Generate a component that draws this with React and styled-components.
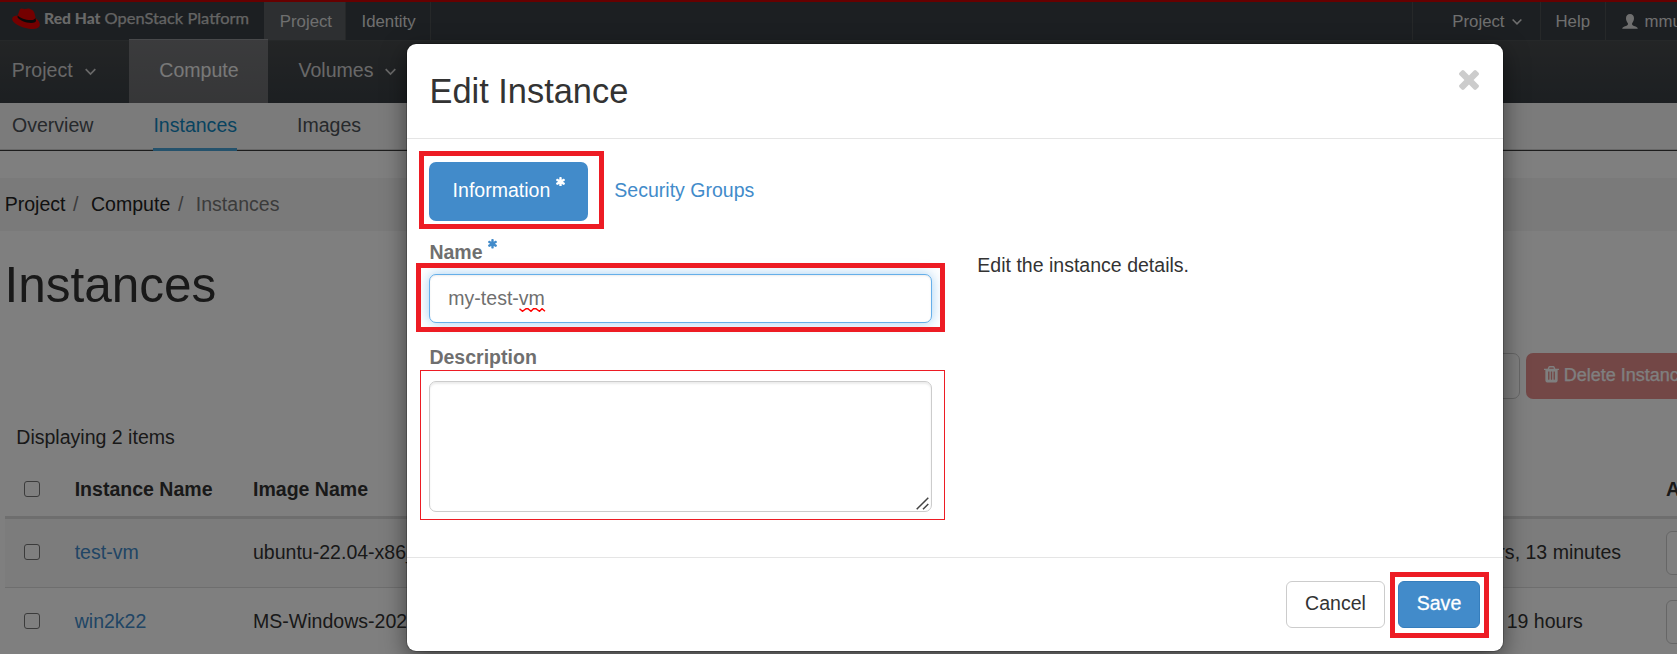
import React from "react";
import styled, { createGlobalStyle } from "styled-components";

const GlobalStyle = createGlobalStyle`
  *, *::before, *::after { box-sizing: border-box; }
  html, body { margin: 0; padding: 0; background: #fff; overflow: hidden; }
  body { font: 19.55px/28px "Liberation Sans", Arial, sans-serif; color: #333; }
`;

const Screen = styled.div`
  position: relative;
  width: 1677px;
  height: 654px;
  overflow: hidden;
  background: #fff;
`;

/* ---------- top bar ---------- */
const TopBar = styled.header`
  display: flex;
  height: 41px;
  border-top: 2px solid #cc0000;
  border-bottom: 1px solid #4d5053;
  background: #393f44;
  font-size: 16.8px;
  color: #dedede;
`;
const Brand = styled.div`
  width: 264px;
  svg { display: block; }
`;
const TopItem = styled.div`
  display: flex;
  align-items: center;
  flex: none;
  width: ${(p) => p.$w}px;
  padding: 1px 0 0 ${(p) => p.$pl}px;
  white-space: nowrap;
  overflow: hidden;
  border-${(p) => p.$side || "right"}: 1px solid #4d5053;
  background: ${(p) => (p.$active ? "#5a5e63" : "transparent")};
  svg { flex: none; margin-right: ${(p) => p.$iconGap || 0}px; }
`;
const Spacer = styled.div`
  flex: 1;
`;

/* ---------- main navigation ---------- */
const MainNav = styled.nav`
  display: flex;
  height: 62px;
  background: linear-gradient(#474a4c, #393f44);
  color: #d1d1d1;
`;
const MainItem = styled.div`
  display: flex;
  align-items: center;
  justify-content: ${(p) => (p.$active ? "center" : "flex-start")};
  width: ${(p) => p.$w}px;
  height: ${(p) => (p.$active ? 64 : 62)}px;
  margin-top: ${(p) => (p.$active ? -2 : 0)}px;
  padding: 0 0 4px ${(p) => p.$pl || 0}px;
  border-top: ${(p) => (p.$active ? "1px solid #919396" : "0")};
  background: ${(p) => (p.$active ? "linear-gradient(#76777a, #6c6d70)" : "transparent")};
  color: ${(p) => (p.$active ? "#f1f1f1" : "inherit")};
  svg { margin-left: ${(p) => p.$gap || 0}px; margin-top: 3px; }
`;
const SubNav = styled.nav`
  display: flex;
  gap: 60px;
  height: 48px;
  padding-left: 12px;
  background: #f7f7f7;
  border-bottom: 1px solid #3a3a3a;
  box-shadow: inset 0 -1px 0 #cecece;
`;
const SubItem = styled.div`
  height: 48px;
  line-height: 44px;
  color: ${(p) => (p.$active ? "#1187c0" : "#4d5258")};
  border-bottom: ${(p) => (p.$active ? "3px solid #4aa4d8" : "0")};
`;

/* ---------- page content ---------- */
const Breadcrumb = styled.div`
  display: flex;
  height: 53px;
  margin-top: 27px;
  padding-left: 4.7px;
  line-height: 52px;
  background: #f5f5f5;
`;
const Crumb = styled.span`
  color: ${(p) => (p.$current ? "#777" : "#222")};
`;
const Slash = styled.span`
  margin: 0 12.5px 0 7.6px;
  color: #777;
`;
const PageTitle = styled.h1`
  height: 70px;
  margin: 19px 0 0;
  padding-left: 4.5px;
  font-size: 49.5px;
  font-weight: 400;
  line-height: 70px;
  color: #333;
`;
const ActionBar = styled.div`
  display: flex;
  justify-content: flex-end;
  gap: 6px;
  height: 46px;
  margin-top: 33px;
`;
const LaunchButton = styled.div`
  width: 120px;
  border: 1px solid #ccc;
  border-radius: 7px;
  background: #fff;
`;
const DeleteButton = styled.div`
  display: flex;
  align-items: center;
  gap: 4.7px;
  width: 151px;
  padding: 0 0 3px 18px;
  border-radius: 7px 0 0 7px;
  background: #e68f8d;
  color: #fff;
  font-size: 18px;
  white-space: nowrap;
  overflow: hidden;
  -webkit-text-stroke: 0.25px #fff;
  svg { flex: none; }
`;
const Count = styled.div`
  margin-top: 24px;
  padding-left: 16.3px;
  line-height: 28px;
`;
const Table = styled.div`
  margin-left: 5px;
`;
const Row = styled.div`
  display: grid;
  grid-template-columns: 69.7px 178.3px 1196.5px 216.5px 60px;
  align-items: center;
  height: ${(p) => p.$h}px;
  padding: ${(p) => (p.$head ? "10px 0 0" : "0 0 2px")};
  border-bottom: ${(p) => (p.$head ? "3px solid #dddddd" : "1px solid #dddddd")};
  background: ${(p) => (p.$odd ? "#f9f9f9" : "#fff")};
  font-weight: ${(p) => (p.$head ? 700 : 400)};
  white-space: nowrap;
`;
const CheckBox = styled.div`
  width: 16px;
  height: 16px;
  margin-left: 19px;
  border: 1.5px solid #767676;
  border-radius: 3px;
  background: #fff;
`;
const InstanceLink = styled.a`
  color: #428bca;
`;
const RowButton = styled.div`
  width: 120px;
  height: 44px;
  margin-top: 2px;
  border: 1px solid #ccc;
  border-radius: 6px;
  background: #fff;
`;

/* ---------- modal ---------- */
const Backdrop = styled.div`
  position: absolute;
  inset: 0;
  background: rgba(0, 0, 0, 0.5);
`;
const Modal = styled.section`
  position: absolute;
  left: 407px;
  top: 44px;
  width: 1096px;
  height: 607px;
  border-radius: 9px;
  background: #fff;
  box-shadow: 0 0 0 1px rgba(0, 0, 0, 0.2), 0 8px 25px rgba(0, 0, 0, 0.5);
`;
const ModalHeader = styled.div`
  display: flex;
  justify-content: space-between;
  height: 95px;
  padding: 24px 24px 0 22.5px;
  border-bottom: 1px solid #e5e5e5;
  svg { margin-top: 2px; }
`;
const ModalTitle = styled.h2`
  margin: 0;
  font-size: 34.4px;
  font-weight: 400;
  line-height: 46px;
`;
const ModalBody = styled.div`
  height: 418px;
  padding: 23px 22px 0;
`;
const Tabs = styled.div`
  display: flex;
  height: 59px;
`;
const Marked = styled.div`
  position: relative;
`;
/* Red outline drawn around a part; $o is the outset: top right bottom left. */
const Outline = styled.div`
  position: absolute;
  pointer-events: none;
  inset: ${(p) => p.$o};
  border: ${(p) => (p.$thin ? 1 : 5)}px solid #ed1c24;
`;
const Tab = styled.div`
  display: flex;
  height: 59px;
  padding-left: ${(p) => (p.$active ? 23.6 : 26.3)}px;
  width: ${(p) => (p.$active ? "159px" : "auto")};
  line-height: 56px;
  border-radius: 7px;
  background: ${(p) => (p.$active ? "#428bca" : "transparent")};
  color: ${(p) => (p.$active ? "#fff" : "#428bca")};
  svg { margin: 14.5px 0 0 5.5px; }
`;
const Columns = styled.div`
  display: flex;
`;
const Fields = styled.div`
  width: 503px;
`;
const Label = styled.label`
  display: flex;
  height: ${(p) => p.$h}px;
  padding-top: ${(p) => p.$pt}px;
  padding-left: 0.4px;
  font-weight: 700;
  line-height: 28px;
  color: #6f6f6f;
  svg { margin: 1px 0 0 5px; color: #428bca; }
`;
const NameInput = styled.div`
  height: 49px;
  padding-left: 18.3px;
  line-height: 47px;
  border: 1px solid #66afe9;
  border-radius: 7px;
  background: #fff;
  color: #6f6f6f;
  box-shadow: inset 0 1px 2px rgba(0, 0, 0, 0.08), 0 0 13px rgba(102, 175, 233, 0.6);
`;
const Misspelt = styled.span`
  position: relative;
  svg { position: absolute; left: 0; bottom: -3px; }
`;
const TextArea = styled.div`
  display: flex;
  align-items: flex-end;
  justify-content: flex-end;
  height: 131px;
  padding: 0 2px 1px 0;
  border: 1px solid #ccc;
  border-radius: 7px;
  box-shadow: inset 0 2px 2px rgba(0, 0, 0, 0.075);
`;
const Help = styled.p`
  margin: 30px 0 0 45.3px;
`;
const ModalFooter = styled.div`
  display: flex;
  justify-content: flex-end;
  align-items: flex-start;
  gap: 13px;
  height: 94px;
  padding: 23px 23px 0 0;
  border-top: 1px solid #e5e5e5;
`;
const Button = styled.div`
  width: ${(p) => p.$w}px;
  height: 47px;
  line-height: 43px;
  text-align: center;
  border: 1px solid ${(p) => (p.$primary ? "#357ebd" : "#ccc")};
  border-radius: 6px;
  background: ${(p) => (p.$primary ? "#428bca" : "#fff")};
  color: ${(p) => (p.$primary ? "#fff" : "#333")};
  -webkit-text-stroke: ${(p) => (p.$primary ? "0.3px #fff" : "0")};
`;

/* ---------- icons ---------- */
const Chevron = ({ w = 11 }) => (
  <svg width={w} height="8" viewBox="0 0 11 8" fill="none" stroke="currentColor" strokeWidth="1.7">
    <path d="M.7 1.2 5.5 6 10.3 1.2" />
  </svg>
);
const Asterisk = () => (
  <svg width="9" height="9.6" viewBox="180 128 1432 1536" fill="currentColor">
    <path d="M1546 1050q46 26 59.5 77.5t-12.5 97.5l-64 110q-26 46-77.5 59.5t-97.5-12.5l-266-153v307q0 52-38 90t-90 38h-128q-52 0-90-38t-38-90v-307l-266 153q-46 26-97.5 12.5t-77.5-59.5l-64-110q-26-46-12.5-97.5t59.5-77.5l266-154-266-154q-46-26-59.5-77.5t12.5-97.5l64-110q26-46 77.5-59.5t97.5 12.5l266 153v-307q0-52 38-90t90-38h128q52 0 90 38t38 90v307l266-153q46-26 97.5-12.5t77.5 59.5l64 110q26 46 12.5 97.5t-59.5 77.5l-266 154z" />
  </svg>
);
const Close = () => (
  <svg width="20" height="20" viewBox="110 366 1188 1188" fill="#ccc">
    <path d="M1298 1322q0 40-28 68l-136 136q-28 28-68 28t-68-28l-294-294-294 294q-28 28-68 28t-68-28l-136-136q-28-28-28-68t28-68l294-294-294-294q-28-28-28-68t28-68l136-136q28-28 68-28t68 28l294 294 294-294q28-28 68-28t68 28l136 136q28 28 28 68t-28 68l-294 294 294 294q28 28 28 68z" />
  </svg>
);
const Trash = () => (
  <svg width="15" height="16.4" viewBox="192 128 1408 1536" fill="currentColor">
    <path d="M704 1376v-704q0-14-9-23t-23-9h-64q-14 0-23 9t-9 23v704q0 14 9 23t23 9h64q14 0 23-9t9-23zm256 0v-704q0-14-9-23t-23-9h-64q-14 0-23 9t-9 23v704q0 14 9 23t23 9h64q14 0 23-9t9-23zm256 0v-704q0-14-9-23t-23-9h-64q-14 0-23 9t-9 23v704q0 14 9 23t23 9h64q14 0 23-9t9-23zm-544-992h448l-48-117q-7-9-17-11h-317q-10 2-17 11zm928 32v64q0 14-9 23t-23 9h-96v948q0 83-47 143.5t-113 60.5h-832q-66 0-113-58.5t-47-141.5v-952h-96q-14 0-23-9t-9-23v-64q0-14 9-23t23-9h309l70-167q15-37 54-63t79-26h320q40 0 79 26t54 63l70 167h309q14 0 23 9t9 23z" />
  </svg>
);
const User = () => (
  <svg width="16" height="15" viewBox="0 0 16 15" fill="currentColor">
    <path d="M8 0c2.5 0 4 1.8 4 4.3 0 2-.9 3.9-1.9 4.9v1.2c.2.9 1.4 1.2 2.9 1.9 1.5.6 2.5 1.1 2.8 2.5H.2c.3-1.400 1.300-1.900 2.800-2.500 1.500-.7 2.700-1 2.900-1.900V9.200C4.900 8.200 4 6.300 4 4.300 4 1.800 5.500 0 8 0z" />
  </svg>
);
const Logo = () => (
  <svg width="264" height="38" viewBox="0 2 264 38">
    <path
      d="M12.2 18.5c.2-1.8 2.6-2.8 5.5-2.9L19.5 10.5c.4-1.3 1.2-2 2.3-1.9 1.5.1 2.2.9 3.5.5 1.8-.6 3-.9 4.8-.2 2.4.9 3.7 2 4.3 4.2l1.400 5.400c2.300 1.400 4.300 4 4 6.500-.4 3.400-5.400 4.500-10.800 3.700C20.300 27.400 11.800 23 12.200 18.500z"
      fill="#e80000"
    />
    <path d="M17.9 15.4l-.5 1.7c1.5 3.2 8.6 6 13.7 6 3.4 0 5-.9 4.9-2.500l-.7-2.800c-.4 1.700-1.900 2.400-4.900 2.300-4.800-.2-10.500-2-12.500-4.700z" fill="#151515" />
    <g fontFamily="Lato, 'Open Sans', sans-serif" fontSize="15.4">
      <text x="44" y="24.3" fontWeight="900" fill="#d2d2d2" textLength="56.5" lengthAdjust="spacingAndGlyphs">Red Hat</text>
      <text x="104.5" y="24.3" fill="#c8c8c8" stroke="#c8c8c8" strokeWidth="0.25" textLength="144.5" lengthAdjust="spacingAndGlyphs">OpenStack Platform</text>
    </g>
  </svg>
);
const Grip = () => (
  <svg width="13" height="13" viewBox="0 0 13 13" fill="none" stroke="#444" strokeWidth="1.5">
    <path d="M.7 12.3 12.3.7M7 12.3 12.3 7" />
  </svg>
);
const Squiggle = () => (
  <svg width="27" height="4" viewBox="0 0 27 4" fill="none" stroke="#ff0000" strokeWidth="1.4">
    <path d="M.5.7 3.5 3.3 7 .7 9 .7 12 3.3 14.5.7 17 .7 20.5 3.3 23 .7 26 3.3" />
  </svg>
);

const instances = [
  { name: "test-vm", image: "ubuntu-22.04-x86_64", age: "2 hours, 13 minutes" },
  { name: "win2k22", image: "MS-Windows-2022", age: "1 day, 19 hours" },
];

export default function App() {
  return (
    <Screen>
      <GlobalStyle />
      <TopBar>
        <Brand><Logo /></Brand>
        <TopItem $w={82} $pl={15.8} $active>Project</TopItem>
        <TopItem $w={85} $pl={15.5}>Identity</TopItem>
        <Spacer />
        <TopItem $w={128} $pl={39.3} $side="left">
          Project<span style={{ width: 7 }} /><Chevron w={10} />
        </TopItem>
        <TopItem $w={65} $pl={14.5} $side="left">Help</TopItem>
        <TopItem $w={72} $pl={15.5} $side="left" $iconGap={7}><User />mmu</TopItem>
      </TopBar>
      <MainNav>
        <MainItem $w={129} $pl={11.8} $gap={12}>Project<Chevron /></MainItem>
        <MainItem $w={139} $pl={1} $active>Compute</MainItem>
        <MainItem $w={160} $pl={30.5} $gap={11.5}>Volumes<Chevron /></MainItem>
      </MainNav>
      <SubNav>
        <SubItem>Overview</SubItem>
        <SubItem $active>Instances</SubItem>
        <SubItem>Images</SubItem>
      </SubNav>
      <Breadcrumb>
        <Crumb>Project</Crumb><Slash>/</Slash>
        <Crumb>Compute</Crumb><Slash>/</Slash>
        <Crumb $current>Instances</Crumb>
      </Breadcrumb>
      <PageTitle>Instances</PageTitle>
      <ActionBar>
        <LaunchButton />
        <DeleteButton><Trash />Delete Instances</DeleteButton>
      </ActionBar>
      <Count>Displaying 2 items</Count>
      <Table>
        <Row $h={68} $head>
          <CheckBox /><span>Instance Name</span><span>Image Name</span><span>Age</span><span>Actions</span>
        </Row>
        {instances.map((row, i) => (
          <Row key={row.name} $h={69} $odd={i % 2 === 0}>
            <CheckBox /><InstanceLink>{row.name}</InstanceLink><span>{row.image}</span><span>{row.age}</span><RowButton />
          </Row>
        ))}
      </Table>
      <Backdrop />
      <Modal>
        <ModalHeader>
          <ModalTitle>Edit Instance</ModalTitle>
          <Close />
        </ModalHeader>
        <ModalBody>
          <Tabs>
            <Marked>
              <Tab $active>Information<Asterisk /></Tab>
              <Outline $o="-11px -16px -8px -10px" />
            </Marked>
            <Tab>Security Groups</Tab>
          </Tabs>
          <Columns>
            <Fields>
              <Label $h={53} $pt={17}>Name<Asterisk /></Label>
              <Marked>
                <NameInput>my-test-<Misspelt>vm<Squiggle /></Misspelt></NameInput>
                <Outline $o="-11px -13px -9px -13px" />
              </Marked>
              <Label $h={58} $pt={20}>Description</Label>
              <Marked>
                <TextArea><Grip /></TextArea>
                <Outline $thin $o="-11px -13px -8px -9px" />
              </Marked>
            </Fields>
            <Help>Edit the instance details.</Help>
          </Columns>
        </ModalBody>
        <ModalFooter>
          <Button $w={99}>Cancel</Button>
          <Marked>
            <Button $w={82} $primary>Save</Button>
            <Outline $o="-9px -9px -10px -8px" />
          </Marked>
        </ModalFooter>
      </Modal>
    </Screen>
  );
}
